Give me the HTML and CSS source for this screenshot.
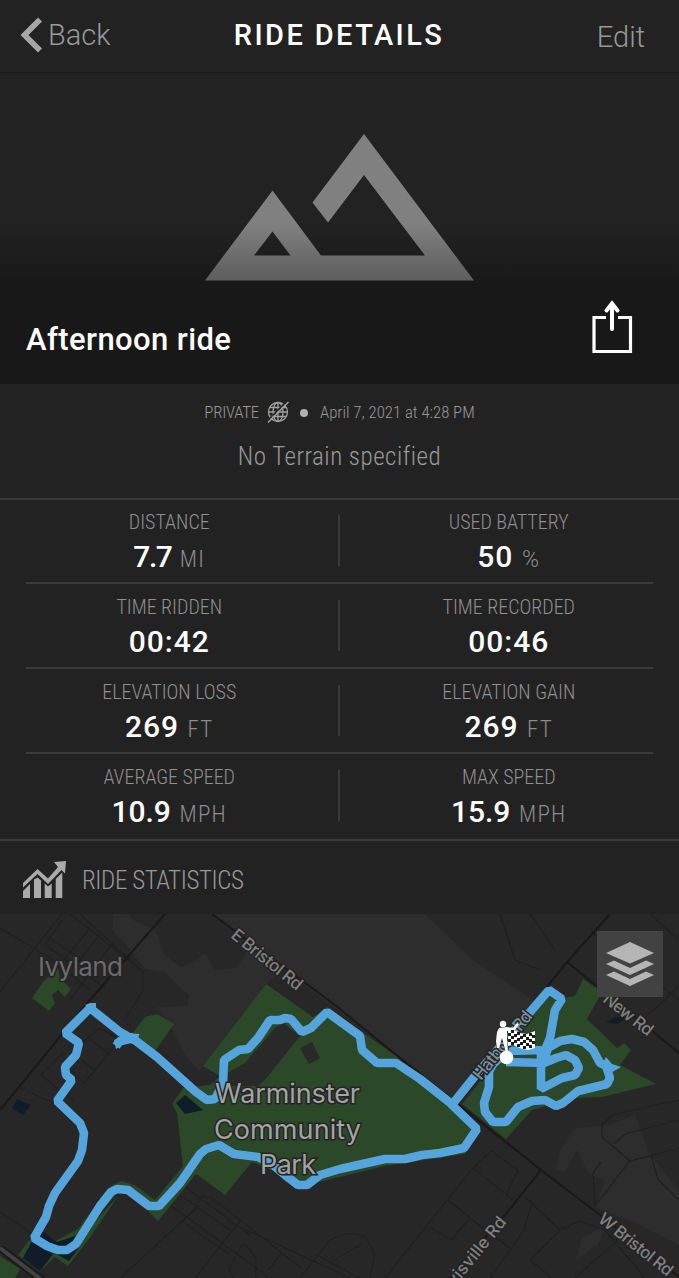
FILE: index.html
```html
<!DOCTYPE html>
<html lang="en">
<head>
  <meta charset="utf-8">
  <title>Ride Details</title>
  <link rel="stylesheet" href="styles.css">
</head>
<body>
  <header class="navbar">
    <a class="back" href="#">
      <svg class="back-icon" viewBox="0 0 22 36"><path d="M18 .5 22 4.5 8.5 18 22 31.5 18 35.5.5 18z" fill="#a6a6a6"/></svg>
      <span class="back-text">Back</span>
    </a>
    <h1 class="title">RIDE DETAILS</h1>
    <a class="edit" href="#">Edit</a>
  </header>

  <section class="hero">
    <svg class="mountain" viewBox="205 134 269 147">
      <path fill="#808080" fill-rule="evenodd" d="M205 280.500 272.500 190.500 321 255.500H425L364 175 328 222.500 312.500 202.500 364 134 474 280.500zM254 255.500H290.500L272.500 231.500z"/>
    </svg>
    <div class="hero-bar">
      <h2 class="ride-name">Afternoon ride</h2>
      <svg class="share" viewBox="592 300 42 54" fill="none" stroke="#fff" stroke-width="3.200">
        <path d="M606 317.500H594V351.500H630.500V317.500H618" />
        <path d="M612 329V304M606.500 310.500 612 303.500 617.500 310.500" stroke-width="4" stroke-linecap="round" />
      </svg>
    </div>
  </section>

  <section class="meta">
    <div class="meta-line">
      <span class="privacy">PRIVATE</span>
      <svg class="globe" viewBox="0 0 22 22" fill="none" stroke="#a0a0a0" stroke-width="1.300">
        <circle cx="11" cy="11" r="9.500"/><ellipse cx="11" cy="11" rx="5" ry="9.500"/>
        <path d="M11 1.500V20.500M1.500 11H20.500M3 6.500H19M3 15.500H19"/>
        <path d="M0 20 20 0" stroke="#222" stroke-width="1.500"/>
        <path d="M1 21.500 21.500 1" stroke-width="1.500"/>
      </svg>
      <span class="dot"></span>
      <span class="date">April 7, 2021 at 4:28 PM</span>
    </div>
    <div class="terrain">No Terrain specified</div>
  </section>

  <section class="stats">
    <div class="row">
      <div class="stat"><div class="label">DISTANCE</div><div class="value"><span class="tight">7.7</span> <span class="unit">MI</span></div></div>
      <div class="stat"><div class="label">USED BATTERY</div><div class="value">50 <span class="unit percent">%</span></div></div>
    </div>
    <div class="row">
      <div class="stat"><div class="label">TIME RIDDEN</div><div class="value">00:42</div></div>
      <div class="stat"><div class="label">TIME RECORDED</div><div class="value">00:46</div></div>
    </div>
    <div class="row">
      <div class="stat"><div class="label">ELEVATION LOSS</div><div class="value">269 <span class="unit">FT</span></div></div>
      <div class="stat"><div class="label">ELEVATION GAIN</div><div class="value">269 <span class="unit">FT</span></div></div>
    </div>
    <div class="row">
      <div class="stat"><div class="label">AVERAGE SPEED</div><div class="value"><span class="narrow">10.9</span> <span class="unit">MPH</span></div></div>
      <div class="stat"><div class="label">MAX SPEED</div><div class="value"><span class="narrow">15.9</span> <span class="unit">MPH</span></div></div>
    </div>
  </section>

  <a class="statistics" href="#">
    <svg class="chart-icon" viewBox="22 860 45 39" fill="#aaa">
      <path d="M23 898V891L30 884V898zM34 898V879.500L37.500 877.500 41 880.500V898zM44.700 898V883.500L48 886.500 51.700 883.500V898zM55.700 898V879L62.300 872.500V898z"/>
      <path d="M23 883 37.500 869 48 878.500 58 867 54 862 66 861 65 873.500 61.500 870 48 884 37.500 874 23 887.500z"/>
    </svg>
    <span class="statistics-text">RIDE STATISTICS</span>
  </a>

  <section class="map">
    <svg class="map-canvas" viewBox="0 914 679 364">
      <rect x="0" y="914" width="679" height="364" fill="#272727"/>

      <!-- lighter land -->
      <g fill="#2d2d2d">
        <path d="M212 914 400 1058 453 1102 541 1005 473 960 425 914z"/>
        <path d="M113 914V930L133 953 145 969 164 972 189 995 187 1006 157 1007 167 1020 188 1060 200 1070 266 984 277 975 250 945 238 968 215 970 205 953 190 964 180 967 165 955 155 930 133 920 128 914z"/>
        <path d="M556 1171 560 1150 575 1128 610 1125 635 1115 650 1155 679 1190V1245L640 1225 595 1207 605 1180 590 1175 577 1150 565 1172z"/>
        <path d="M576 1260 582 1238 605 1226 598 1244z"/>
      </g>

      <!-- minor streets -->
      <g fill="none" stroke="#202020" stroke-width="1.200">
        <path d="M0 928 50 958 90 990M62 914 0 992M80 914 143 972V990L125 1020M62 920 45 945 105 988M50 938 85 962M90 928 60 965M101 933 78 962M112 944 70 1000M70 914 135 965"/>
        <path d="M100 1028 120 1040 84 1083 65 1064 85 1040zM88 1038 108 1053M82 1060 96 1072M63 1053 41 1075 73 1101M20 1088 40 1097 56 1104M0 1212 32 1234"/>
        <path d="M170 1205 300 1300M180 1183 250 1235M195 1205 203 1196 212 1198 301 1268M180 1220 229 1254M180 1195 230 1230M240 1221 195 1278M200 1205 120 1278M242 1244 229 1270 235 1278M245 1244 256 1258V1278M281 1254 268 1270M300 1278 330 1240 348 1233 365 1236 375 1254 370 1278M315 1254 360 1278M330 1262 362 1244M225 1220 350 1278"/>
        <path d="M473 1168 491 1151 518 1170 506 1196M473 1168 513 1200M473 1168 385 1278M448 1200 470 1218 510 1248M430 1227 451 1240 470 1218M531 1206 524 1230 490 1278M524 1196 560 1230M601 1162 593 1173 595 1207M594 1207 630 1161 679 1148M630 1161 602 1137V1125L612 1115 679 1100M614 1144 625 1134 679 1120M651 1155 658 1180 679 1200M530 1260 560 1230 580 1221 605 1230 645 1278M618 1240 575 1278M530 1260 552 1278"/>
        <path d="M500 914 515 960 540 970M530 914 555 950M590 930 679 1000M650 914 679 940M640 1022 665 1000 679 985"/>
      </g>
      <g fill="none" stroke="#191919" stroke-width="2">
        <path d="M165 914 90 1000 0 1110M212 914 335 1005 400 1058 541 1170 600 1215 679 1277M610 914 567 962 452 1105M567 962 679 1053M541 1170 505 1215 450 1278"/>
      </g>

      <!-- parks -->
      <g fill="#2b4829">
        <path d="M58 968 60 978 71 989 65 997 58 990 52 995 55 1003 49 1011 32 998 43 982 53 973z"/>
        <path d="M132 1034 145 1017 157 1014 174 1024 155 1051z"/>
        <path d="M266 984 313 1017 327 1007 396 1056 480 1132 465 1154 385 1166 307 1185 252 1162 225 1195 196 1174 158 1221 135 1198 122 1197 68 1266 55 1257 40 1271 18 1255 34 1234 55 1241 78 1229 110 1186 122 1181 136 1186 155 1200 183 1166 177 1113 172 1104 183 1088 210 1085 220 1076 203 1066z"/>
        <path d="M550 996 563 998 575 996 583 979 602 992 587 1019 617 1048 624 1043 631 1050 620 1065 656 1084 602 1097 576 1098 532 1110 506 1139 462 1104 545 1000z"/>
        <path d="M0 1256 20 1269 15 1278H0z"/>
      </g>
      <g fill="#292929">
        <path d="M283 1023 300 1036 265 1080 258 1086H216L222 1076 245 1063 258 1048 275 1028z"/>
        <path d="M300 1048 312 1042 320 1058 309 1064z"/>
      </g>
      <path fill="#272727" d="M80 1238 118 1192 128 1193 136 1198 72 1264 118 1196z"/>
      <g fill="#101d29">
        <path d="M176 1103 185 1095 203 1110 185 1114z"/>
        <path d="M17 1099 31 1105 23 1115 12 1108z"/>
        <path d="M32 1241 53 1254 40 1271 23 1258z"/>
        <path d="M42 1231 57 1242 78 1235 80 1246 69 1261 53 1252 38 1242z"/>
        <path d="M606 1022 616 1017 628 1018 617 1024z"/>
      </g>
      <path d="M0 1248 42 1280" stroke="#1b1b1b" stroke-width="8"/>
      <path d="M0 1248 42 1280" stroke="#414141" stroke-width="4"/>

      <!-- recorded route -->
      <g fill="none" stroke="#55a5dc" stroke-width="8.600" stroke-linejoin="bevel">
        <path d="M453 1105 420 1079 396 1063 377 1063 362 1050 360 1036 327 1012 311 1028 302 1032 291 1019 285 1018 280 1020 270 1020 258 1038 248 1049 239 1050 224 1060 223 1084 215 1099 207 1100 196 1092 157 1057 136 1041 120 1032 90 1008 65 1033 79 1043 76 1055 65 1067 66 1075 72 1080 57 1101 80 1123 84 1133 82 1150 78 1161 55 1193 49 1206 46 1217 34 1238 47 1246 58 1250 67 1250 76 1244 100 1206 111 1192 117 1189 128 1190 149 1206 159 1206 180 1183 200 1154 206 1149 219 1145 234 1154 258 1157 273 1165 285 1175 298 1185 307 1185 320 1175 340 1169 385 1159 405 1159 422 1155 440 1153 464 1148 477 1129 451 1104"/>
        <path d="M451 1106 475 1076 549 990 562 999 555 1010 550 1038 545 1050 507 1051 493 1064 489 1071 489 1087 484 1103 485 1112 493 1122 506 1122 518 1107 532 1101 545 1100 556 1106 563 1103 578 1091 607 1084 610 1078 606 1066 600 1063 593 1050 584 1042 572 1039 560 1041 548 1048 544 1061"/>
        <path d="M506 1062 544 1063 556 1058 566 1055 575 1060 579 1068 575 1075 562 1078 541 1089 541 1052"/>
        <path d="M116 1046 120 1041 134 1037" />
      </g>
      <path fill="#55a5dc" d="M114 1040 124 1036 139 1034 138 1042 122 1045 116 1049zM85 1005 90 1003 96 1003 96 1012zM122 1033 140 1034 133 1040zM602 1064 606 1057 612 1064 621 1067 607 1075z"/>

      <!-- labels -->
      <g class="map-label">
        <text class="town" x="38" y="976" textLength="85">Ivyland</text>
        <text class="park" x="215" y="1103" textLength="145">Warminster</text>
        <text class="park" x="214" y="1139" textLength="147">Community</text>
        <text class="park" x="260" y="1174" textLength="56">Park</text>
        <text class="road" transform="translate(230 937) rotate(39)" textLength="86">E Bristol Rd</text>
        <text class="road" transform="translate(597 1221) rotate(38.500)" textLength="90">W Bristol Rd</text>
        <text class="road" transform="translate(602 1001) rotate(38)" textLength="58">New Rd</text>
        <text class="road hat" transform="translate(481 1081) rotate(-51)" textLength="83">Hatboro Rd</text>
        <text class="road" transform="translate(441 1304) rotate(-51)" textLength="105">Davisville Rd</text>
      </g>

      <!-- finish marker -->
      <g fill="#fff">
        <circle cx="506.500" cy="1057.500" r="6.800"/>
        <circle cx="503" cy="1024" r="3.200"/>
        <path d="M499 1028 507 1027 513 1028 517 1023 519 1024 515 1030 507 1031 507 1038 508 1053H506L502 1038 499 1048H497L496 1041 497 1032z"/>
        <path d="M508 1029 514 1030 520 1033 527 1034 535 1031V1048L528 1050 522 1049 513 1045 508 1046z"/>
      </g>
      <g fill="#1b1b1b">
        <path d="M511 1030h3v3h-3zM517 1032h3v3h-3zM523 1034h3v3h-3zM529 1033h3v3h-3zM508 1033h3v3h-3zM514 1034h3v3h-3zM520 1036h3v3h-3zM526 1037h3v3h-3zM532 1035h3v3h-3zM511 1036h3v3h-3zM517 1038h3v3h-3zM523 1040h3v3h-3zM529 1039h3v3h-3zM508 1039h3v3h-3zM514 1040h3v3h-3zM520 1042h3v3h-3zM526 1043h3v3h-3zM532 1041h3v3h-3zM511 1042h3v3h-3zM517 1044h3v3h-3zM523 1046h3v3h-3zM529 1045h3v3h-3z"/>
      </g>
    </svg>
    <button class="layers">
      <svg viewBox="0 0 50 46" fill="#b5b5b5">
        <path d="M25 1 49 12 25 22.500 1 12z"/>
        <path d="M1 23 9 19.500 25 27 41 19.500 49 23 25 34z"/>
        <path d="M1 34 9 30.500 25 38 41 30.500 49 34 25 45z"/>
      </svg>
    </button>
  </section>
</body>
</html>
```

FILE: styles.css
```css
* {
  box-sizing: border-box;
}

body {
  margin: 0;
  width: 679px;
  height: 1278px;
  overflow: hidden;
  background-color: #222;
  color: #999;
  font-family: Roboto, "Liberation Sans", sans-serif;
  font-weight: 300;
  font-stretch: 87%;
  white-space: nowrap;
}

a {
  color: inherit;
  text-decoration: none;
}

svg {
  display: block;
}

/* top bar */
.navbar {
  display: grid;
  grid-template-columns: 1fr auto 1fr;
  align-items: center;
  height: 73px;
  padding: 0 34px 2px 33px;
  border-bottom: 1px solid #181818;
}

.back {
  display: flex;
  align-items: center;
  gap: 6px;
  margin-left: -13px;
  font-size: 29px;
  font-stretch: 100%;
}

.back-icon {
  width: 22px;
  height: 36px;
}

.title {
  margin: 0;
  color: #fff;
  font-size: 29px;
  font-weight: 500;
  font-stretch: 100%;
  letter-spacing: 2.4px;
}

.edit {
  justify-self: end;
  padding-top: 4px;
  font-size: 29px;
  font-stretch: 100%;
}

/* picture and ride name */
.hero {
  display: flex;
  flex-direction: column;
  position: relative;
  height: 311px;
  padding-top: 61px;
}

.mountain {
  width: 269px;
  height: 147px;
  margin: 0 auto;
}

.hero-bar {
  position: absolute;
  left: 0;
  right: 0;
  bottom: 0;
  display: flex;
  align-items: center;
  justify-content: space-between;
  height: 160px;
  padding: 70px 45px 0 26px;
  background: linear-gradient(rgba(0, 0, 0, 0), rgba(0, 0, 0, .27) 57px, #181818 58px);
}

.ride-name {
  margin: 0;
  color: #fff;
  font-size: 31px;
  font-weight: 500;
  font-stretch: 100%;
  letter-spacing: .4px;
}

.share {
  width: 42px;
  height: 54px;
  margin-bottom: 24px;
}

.meta {
  display: flex;
  flex-direction: column;
  align-items: center;
  height: 114px;
  padding-top: 16px;
}

.meta-line {
  display: flex;
  align-items: center;
  height: 24px;
  font-size: 16.8px;
}

.privacy {
  letter-spacing: -.2px;
}

.globe {
  width: 22px;
  height: 22px;
  margin: 0 11px 0 8px;
}

.dot {
  width: 8px;
  height: 8px;
  margin: 2px 12px 0 0;
  border-radius: 50%;
  background-color: #b0b0b0;
}

.terrain {
  margin-top: 17px;
  font-size: 25px;
  line-height: 32px;
  letter-spacing: .5px;
}

/* stat table */
.stats {
  height: 343px;
  padding: 0 26px;
  border-top: 2px solid #3a3a3a;
  border-bottom: 2px solid #3a3a3a;
}

.row {
  display: grid;
  grid-template-columns: 1fr 1fr;
  height: 85px;
  padding-top: 12px;
  border-bottom: 2px solid #3a3a3a;
}

.row:first-child {
  height: 84px;
  padding-top: 11px;
}

.row:last-child {
  border-bottom: 0;
}

.stat {
  height: 60px;
  text-align: center;
}

.stat:first-child {
  padding-right: 27px;
  background: linear-gradient(#3a3a3a, #3a3a3a) right 4px / 2px 51px no-repeat;
}

.stat:last-child {
  padding-left: 25px;
}

.label {
  font-size: 20px;
  line-height: 23px;
  color: #909090;
}

.value {
  margin-top: 6px;
  color: #fff;
  font-size: 30px;
  font-weight: 500;
  font-stretch: 100%;
  line-height: 34px;
  letter-spacing: 1px;
}

.tight {
  letter-spacing: -1.5px;
}

.narrow {
  letter-spacing: 0;
}

.unit {
  color: #8c8c8c;
  font-size: 23px;
  font-weight: 300;
  font-stretch: 87%;
  letter-spacing: 1.3px;
}

.percent {
  font-stretch: 100%;
}

.statistics {
  display: flex;
  align-items: center;
  gap: 15px;
  height: 73px;
  padding: 4px 22px 0;
}

.chart-icon {
  width: 45px;
  height: 39px;
}

.statistics-text {
  padding-top: 2px;
  font-size: 25px;
  letter-spacing: -.4px;
}

/* map */
.map {
  position: relative;
  height: 364px;
}

.map-canvas {
  width: 679px;
  height: 364px;
}

.map-label {
  fill: #808080;
  stroke: #242424;
  stroke-width: 3px;
  paint-order: stroke;
  font-family: Inter, "Liberation Sans", sans-serif;
  font-stretch: normal;
  font-weight: 400;
}

.town {
  fill: #6b6b6b;
  font-size: 26px;
}

.park {
  fill: #a3a3a3;
  font-size: 27px;
}

.road {
  font-size: 17px;
  font-weight: 500;
}

.hat {
  fill: #7f8f9a;
}

.layers {
  position: absolute;
  top: 17px;
  right: 16px;
  width: 66px;
  height: 66px;
  padding: 10px 8px;
  border: 0;
  background-color: #424242;
}
```
